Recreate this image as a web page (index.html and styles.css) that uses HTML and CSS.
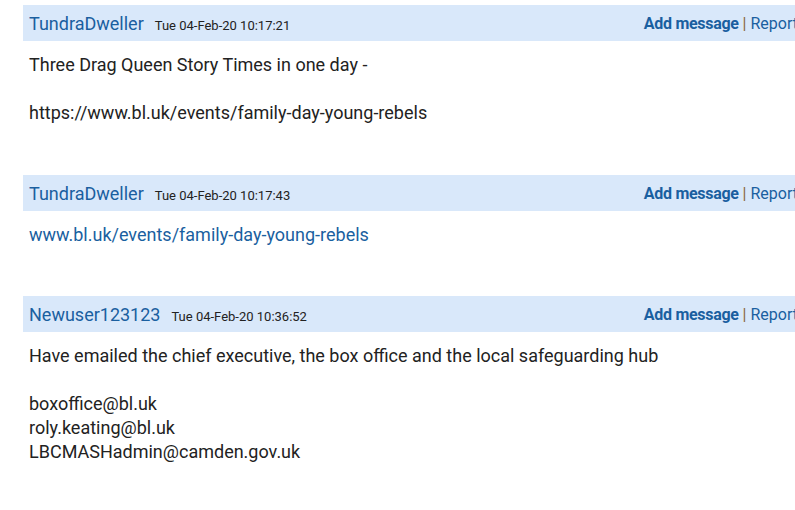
FILE: index.html
```html
<!DOCTYPE html>
<html lang="en">
<head>
<meta charset="utf-8">
<title>Thread</title>
<link rel="stylesheet" href="styles.css">
</head>
<body>
<div class="thread">
  <div class="post">
    <div class="post-head">
      <div class="who"><a class="user" href="#">TundraDweller</a><span class="date">Tue 04-Feb-20 10:17:21</span></div>
      <div class="actions"><a class="add" href="#">Add message</a><span class="sep">|</span><a class="report" href="#">Report</a></div>
    </div>
    <div class="post-body">
      <p>Three Drag Queen Story Times in one day -<br><br>https://www.bl.uk/events/family-day-young-rebels</p>
    </div>
  </div>
  <div class="post">
    <div class="post-head">
      <div class="who"><a class="user" href="#">TundraDweller</a><span class="date">Tue 04-Feb-20 10:17:43</span></div>
      <div class="actions"><a class="add" href="#">Add message</a><span class="sep">|</span><a class="report" href="#">Report</a></div>
    </div>
    <div class="post-body">
      <p class="short"><a class="link" href="#">www.bl.uk/events/family-day-young-rebels</a></p>
    </div>
  </div>
  <div class="post">
    <div class="post-head">
      <div class="who"><a class="user" href="#">Newuser123123</a><span class="date">Tue 04-Feb-20 10:36:52</span></div>
      <div class="actions"><a class="add" href="#">Add message</a><span class="sep">|</span><a class="report" href="#">Report</a></div>
    </div>
    <div class="post-body">
      <p>Have emailed the chief executive, the box office and the local safeguarding hub<br><br>boxoffice@bl.uk<br>roly.keating@bl.uk<br>LBCMASHadmin@camden.gov.uk</p>
    </div>
  </div>
</div>
</body>
</html>
```
FILE: styles.css
```css
html, body {
  margin: 0;
  padding: 0;
  overflow: hidden;
  background: #fff;
}
body {
  font-family: Roboto, "Liberation Sans", Arial, sans-serif;
  color: #222;
}
.thread {
  width: 840px;
  margin: 5px 0 0 23px;
}
.post-head {
  display: flex;
  justify-content: space-between;
  align-items: center;
  height: 36px;
  padding: 0 6px;
  background: #d9e8fa;
}
.who {
  display: flex;
  align-items: baseline;
  gap: 11px;
}
.user {
  font-size: 18px;
  color: #1a5fa0;
  text-decoration: none;
}
.date {
  font-size: 13px;
  color: #222;
}
.actions {
  font-size: 16px;
  display: flex;
  align-items: baseline;
  gap: 4px;
  padding-right: 59px;
}
.add {
  font-weight: bold;
  letter-spacing: -0.3px;
  color: #1a5fa0;
  text-decoration: none;
}
.sep {
  color: #8a6a3c;
}
.report {
  color: #1a5fa0;
  text-decoration: none;
}
.post-body {
  padding: 12px 6px 0;
}
.post-body p {
  margin: 0 0 50px;
  font-size: 18px;
  line-height: 24px;
}
.post-body p.short {
  margin-bottom: 49px;
}
.link {
  color: #1a5fa0;
  text-decoration: none;
}
```
